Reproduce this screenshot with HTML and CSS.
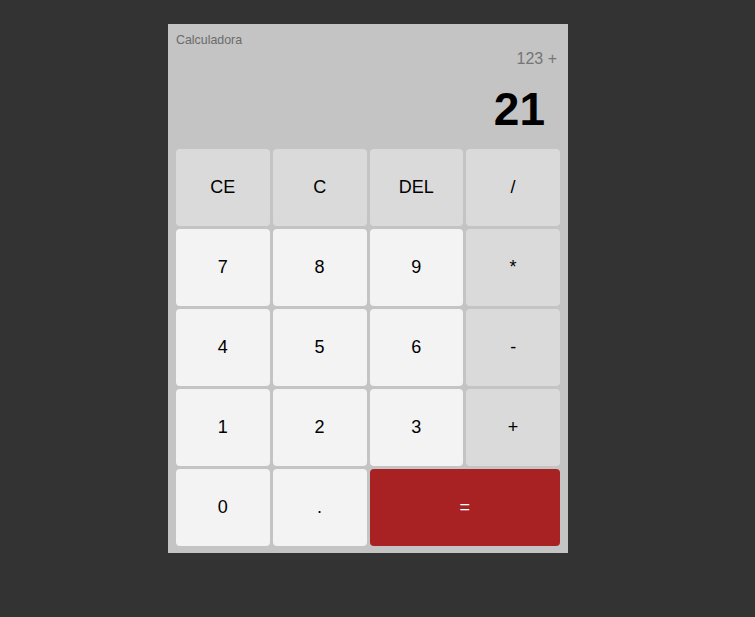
FILE: index.html
```html
<!DOCTYPE html>
<html lang="pt">
<head>
<meta charset="utf-8">
<title>Calculadora</title>
<link rel="stylesheet" href="styles.css">
</head>
<body>
<div class="calc">
  <div class="display">
    <div class="title">Calculadora</div>
    <div class="prev">123 +</div>
    <div class="current">21</div>
  </div>
  <div class="keys">
    <button class="key op">CE</button>
    <button class="key op">C</button>
    <button class="key op">DEL</button>
    <button class="key op">/</button>
    <button class="key">7</button>
    <button class="key">8</button>
    <button class="key">9</button>
    <button class="key op">*</button>
    <button class="key">4</button>
    <button class="key">5</button>
    <button class="key">6</button>
    <button class="key op">-</button>
    <button class="key">1</button>
    <button class="key">2</button>
    <button class="key">3</button>
    <button class="key op">+</button>
    <button class="key">0</button>
    <button class="key">.</button>
    <button class="key eq">=</button>
  </div>
</div>
</body>
</html>
```
FILE: styles.css
```css
html, body {
  margin: 0;
  padding: 0;
}
body {
  background: #333333;
  font-family: "Liberation Sans", Arial, sans-serif;
  display: flex;
  justify-content: center;
  padding: 24px 19px 0 0;
  height: 617px;
  box-sizing: border-box;
}
.calc {
  width: 400px;
  box-sizing: border-box;
  background: #c4c4c4;
  padding: 8px 8px 7px 8px;
  align-self: flex-start;
}
.display {
  height: 117px;
  display: flex;
  flex-direction: column;
}
.title {
  font-size: 12.4px;
  line-height: 16px;
  color: #6b6b6b;
}
.prev {
  font-size: 16px;
  line-height: 18px;
  color: #757575;
  text-align: right;
  margin-top: 2px;
  padding-right: 3px;
}
.current {
  font-size: 46px;
  font-weight: bold;
  line-height: 55px;
  color: #000;
  text-align: right;
  margin-top: 14px;
  padding-right: 15px;
}
.keys {
  display: grid;
  grid-template-columns: repeat(4, 1fr);
  grid-auto-rows: 77px;
  gap: 3px;
}
.key {
  border: none;
  border-radius: 4px;
  background: #f3f3f3;
  font-family: "Liberation Sans", Arial, sans-serif;
  font-size: 18px;
  color: #000;
  padding: 0;
}
.key.op {
  background: #dadada;
}
.key.eq {
  grid-column: span 2;
  background: #a82224;
  color: #fff;
}
```
